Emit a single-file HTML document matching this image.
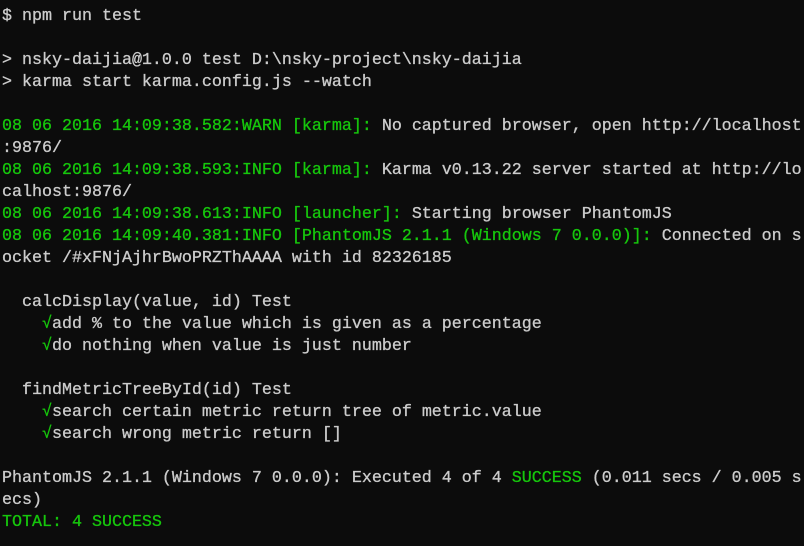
<!DOCTYPE html>
<html><head><style>
html,body{margin:0;padding:0;background:#0c0c0c;width:804px;height:546px;overflow:hidden}
pre{margin:0;position:absolute;left:2px;top:6px;font-family:"Liberation Mono","DejaVu Sans Mono",monospace;font-size:16.67px;line-height:22px;color:#cccccc;white-space:pre;-webkit-text-stroke:0.3px currentColor}
.g{color:#16c60c}
.y{color:#c1c100}
</style></head><body>
<pre style="top:-16px"><span class="g">  ·          ·                                </span><span class="y">·  ·  ·  ·  ·   ·</span></pre>
<pre>$ npm run test

&gt; nsky-daijia@1.0.0 test D:\nsky-project\nsky-daijia
&gt; karma start karma.config.js --watch

<span class="g">08 06 2016 14:09:38.582:WARN [karma]: </span>No captured browser, open http://localhost
:9876/
<span class="g">08 06 2016 14:09:38.593:INFO [karma]: </span>Karma v0.13.22 server started at http://lo
calhost:9876/
<span class="g">08 06 2016 14:09:38.613:INFO [launcher]: </span>Starting browser PhantomJS
<span class="g">08 06 2016 14:09:40.381:INFO [PhantomJS 2.1.1 (Windows 7 0.0.0)]: </span>Connected on s
ocket /#xFNjAjhrBwoPRZThAAAA with id 82326185

  calcDisplay(value, id) Test
    <span class="g">√</span>add % to the value which is given as a percentage
    <span class="g">√</span>do nothing when value is just number

  findMetricTreeById(id) Test
    <span class="g">√</span>search certain metric return tree of metric.value
    <span class="g">√</span>search wrong metric return []

PhantomJS 2.1.1 (Windows 7 0.0.0): Executed 4 of 4 <span class="g">SUCCESS</span> (0.011 secs / 0.005 s
ecs)
<span class="g">TOTAL: 4 SUCCESS</span></pre>
</body></html>
